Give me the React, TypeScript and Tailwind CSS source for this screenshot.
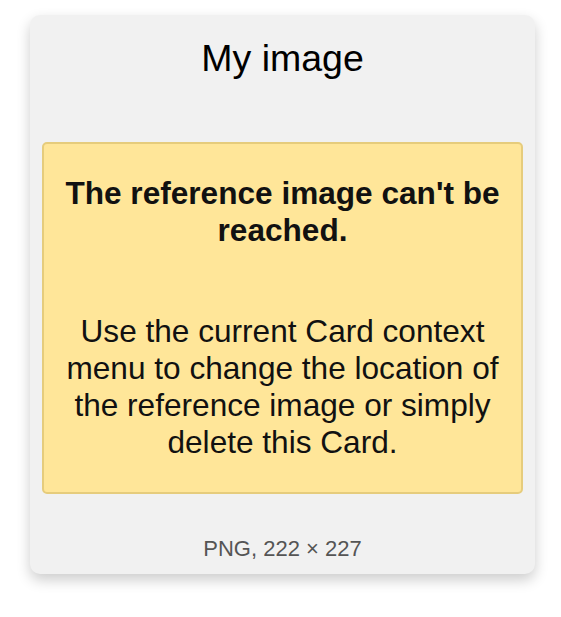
export default function App() {
  return (
    <div className="min-h-screen bg-white pl-[30px] pt-[15px] font-['Liberation_Sans',Arial,sans-serif]">
      <div className="w-[505px] rounded-[10px] bg-[#f1f1f1] px-[12px] pb-[13px] pt-[22px] shadow-[0_6px_14px_rgba(0,0,0,0.2)]">
        <h1 className="text-center text-[37.5px] leading-[42px] text-black">My image</h1>

        <div className="mt-[63px] rounded-[5px] border-2 border-[#e6cc7c] bg-[#ffe699] px-[14px] py-[31px] text-center text-[#111]">
          <p className="text-[31.6px] font-bold leading-[37px]">The reference image can't be reached.</p>
          <p className="mt-[64px] text-[31.6px] leading-[37px]">
            Use the current Card context menu to change the location of the reference image or simply delete
            this Card.
          </p>
        </div>

        <p className="mt-[42px] text-center text-[22px] leading-[25px] text-[#555]">PNG, 222 × 227</p>
      </div>
    </div>
  );
}
